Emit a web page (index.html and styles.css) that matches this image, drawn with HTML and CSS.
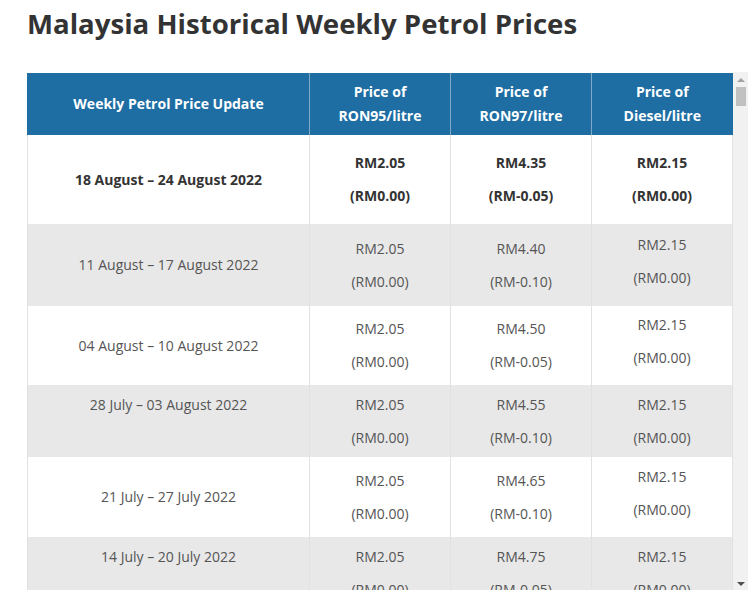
FILE: index.html
```html
<!DOCTYPE html>
<html lang="en">
<head>
<meta charset="utf-8">
<title>Malaysia Historical Weekly Petrol Prices</title>
<link rel="stylesheet" href="styles.css">
</head>
<body>
<h1 class="title">Malaysia Historical Weekly Petrol Prices</h1>
<div class="frame">
  <div class="wrap">
    <table class="prices">
      <thead>
        <tr>
          <th class="c-date">Weekly Petrol Price Update</th>
          <th class="c-num">Price of<br>RON95/litre</th>
          <th class="c-num">Price of<br>RON97/litre</th>
          <th class="c-num">Price of<br>Diesel/litre</th>
        </tr>
      </thead>
      <tbody>
        <tr class="latest">
          <td>18 August – 24 August 2022</td>
          <td><div class="pr"><span>RM2.05</span><span>(RM0.00)</span></div></td>
          <td><div class="pr"><span>RM4.35</span><span>(RM-0.05)</span></div></td>
          <td><div class="pr"><span>RM2.15</span><span>(RM0.00)</span></div></td>
        </tr>
        <tr class="r2">
          <td>11 August – 17 August 2022</td>
          <td><div class="pr"><span>RM2.05</span><span>(RM0.00)</span></div></td>
          <td><div class="pr"><span>RM4.40</span><span>(RM-0.10)</span></div></td>
          <td class="lift"><div class="pr"><span>RM2.15</span><span>(RM0.00)</span></div></td>
        </tr>
        <tr class="r3">
          <td>04 August – 10 August 2022</td>
          <td><div class="pr"><span>RM2.05</span><span>(RM0.00)</span></div></td>
          <td><div class="pr"><span>RM4.50</span><span>(RM-0.05)</span></div></td>
          <td class="lift"><div class="pr"><span>RM2.15</span><span>(RM0.00)</span></div></td>
        </tr>
        <tr class="r4">
          <td class="top">28 July – 03 August 2022</td>
          <td><div class="pr"><span>RM2.05</span><span>(RM0.00)</span></div></td>
          <td><div class="pr"><span>RM4.55</span><span>(RM-0.10)</span></div></td>
          <td><div class="pr"><span>RM2.15</span><span>(RM0.00)</span></div></td>
        </tr>
        <tr class="r5">
          <td>21 July – 27 July 2022</td>
          <td><div class="pr"><span>RM2.05</span><span>(RM0.00)</span></div></td>
          <td><div class="pr"><span>RM4.65</span><span>(RM-0.10)</span></div></td>
          <td class="lift"><div class="pr"><span>RM2.15</span><span>(RM0.00)</span></div></td>
        </tr>
        <tr class="r6">
          <td class="top">14 July – 20 July 2022</td>
          <td><div class="pr"><span>RM2.05</span><span>(RM0.00)</span></div></td>
          <td><div class="pr"><span>RM4.75</span><span>(RM-0.05)</span></div></td>
          <td><div class="pr"><span>RM2.15</span><span>(RM0.00)</span></div></td>
        </tr>
      </tbody>
    </table>
  </div>
  <div class="sbar" aria-hidden="true">
    <div class="sbtn up"></div>
    <div class="strack"><div class="sthumb"></div></div>
    <div class="sbtn down"></div>
  </div>
</div>
</body>
</html>
```

FILE: styles.css
```css
html, body {
  margin: 0;
  padding: 0;
  background: #ffffff;
}

body {
  font-family: "Open Sans", "Noto Sans", "Liberation Sans", sans-serif;
  color: #555555;
  padding: 8px 8px 0 27px;
}

.title {
  margin: 0 0 34px 0;
  font-size: 27.6px;
  line-height: 31px;
  font-weight: 700;
  color: #333333;
}

.frame {
  display: flex;
  width: 721px;
  height: 517px;
}

.wrap {
  width: 706px;
  height: 517px;
  overflow: hidden;
}

/* scrollbar replica */
.sbar {
  width: 15px;
  height: 519px;
  margin-top: -1px;
  background: #f1f1f1;
  display: flex;
  flex-direction: column;
}

.sbtn {
  height: 15px;
  flex: none;
  display: flex;
  align-items: center;
  justify-content: center;
}

.sbtn::before {
  content: "";
  width: 0;
  height: 0;
  border-left: 4px solid transparent;
  border-right: 4px solid transparent;
}

.sbtn.up::before {
  border-bottom: 4px solid #a3a3a3;
}

.sbtn.down::before {
  border-top: 4px solid #505050;
}

.strack {
  flex: 1;
  padding: 0 2px 0 3px;
}

.sthumb {
  height: 19px;
  background: #c1c1c1;
}

.prices {
  width: 706px;
  border-collapse: collapse;
  table-layout: fixed;
  font-size: 14px;
  line-height: 24px;
}

.prices th {
  background: #1e6ea3;
  color: #ffffff;
  font-weight: 700;
  height: 62px;
  padding: 7px 8px;
  box-sizing: border-box;
  text-align: center;
  vertical-align: middle;
  border-left: 1px solid #7fa9c6;
}

.prices th:first-child {
  border-left: 1px solid #1e6ea3;
}

.c-date { width: 282px; }
.c-num { width: 141px; }

.prices td {
  padding: 7px 8px;
  text-align: center;
  vertical-align: middle;
  border-left: 1px solid #e1e1e1;
  border-right: 1px solid #e1e1e1;
  color: #555555;
}

.prices tbody tr:nth-child(even) td {
  background: #e8e8e8;
}

.pr {
  display: flex;
  flex-direction: column;
  align-items: center;
  gap: 9px;
}

.prices td.lift {
  padding-top: 3px;
  padding-bottom: 11px;
}

.prices td.top {
  vertical-align: top;
  padding-top: 8px;
}

.latest td {
  font-weight: 700;
  color: #333333;
}

.prices tr.latest { height: 89px; }
.prices tr.r2 { height: 82px; }
.prices tr.r3 { height: 79px; }
.prices tr.r4 { height: 72px; }
.prices tr.r5 { height: 80px; }
.prices tr.r6 { height: 72px; }
```
